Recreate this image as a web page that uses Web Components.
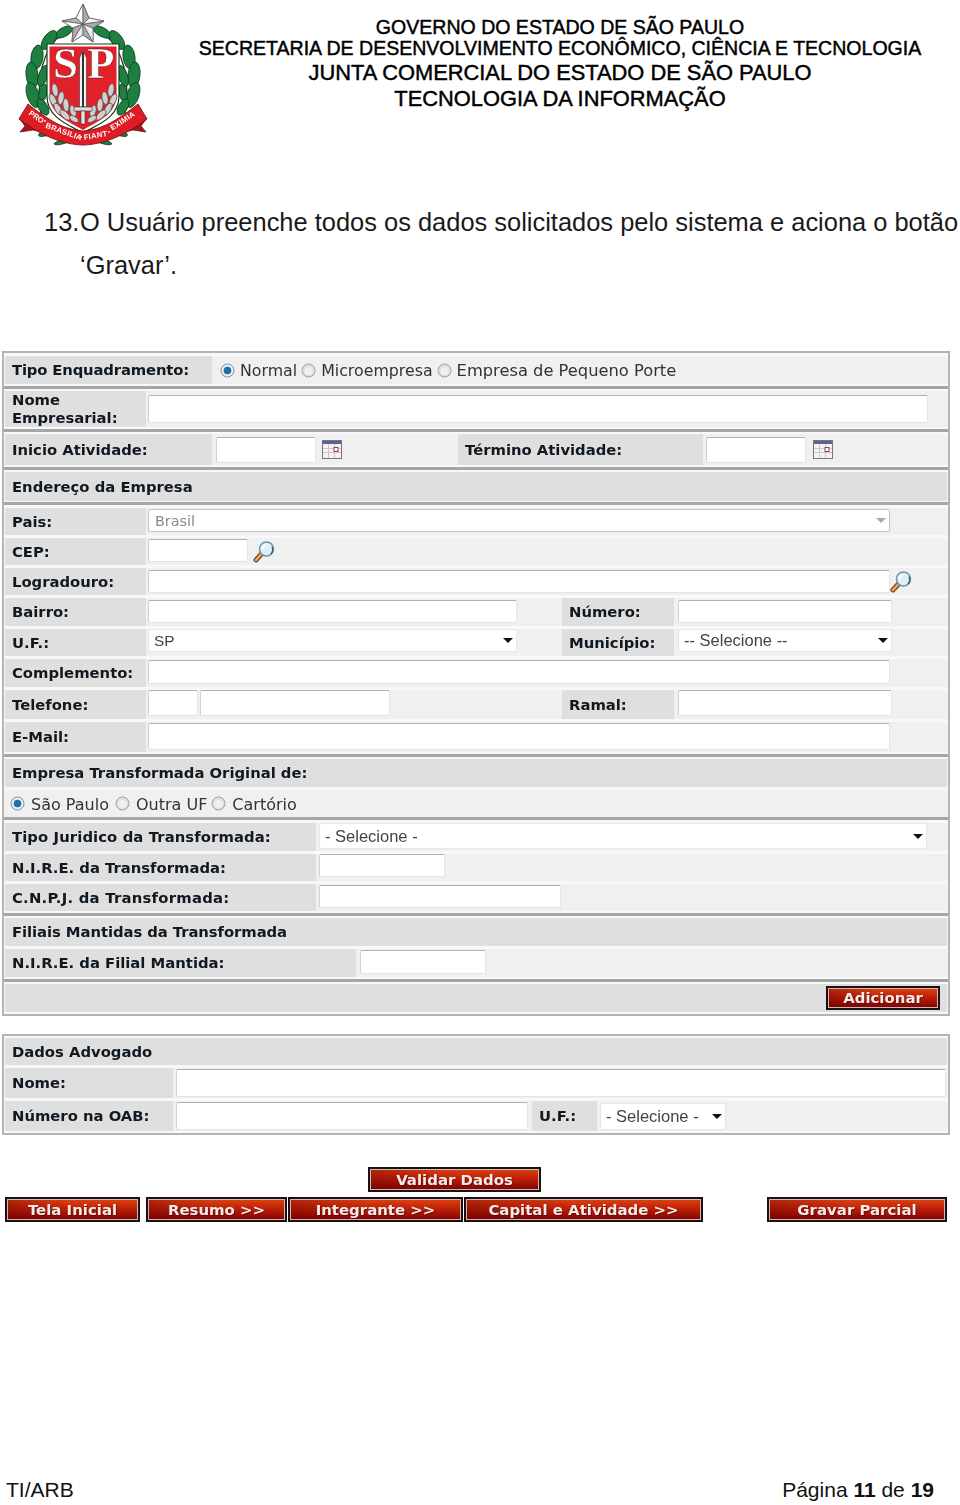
<!DOCTYPE html>
<html lang="pt">
<head>
<meta charset="utf-8">
<title>Manual</title>
<style>
  html, body { margin: 0; padding: 0; background: #fff; }
  body { height: 1505px; overflow: hidden; display: flex; flex-direction: column; font-family: "Liberation Sans", sans-serif; color: #111; }
</style>
</head>
<body>
<gov-header>
  <sp-logo slot="logo"></sp-logo>
  <span>GOVERNO DO ESTADO DE SÃO PAULO</span>
  <span>SECRETARIA DE DESENVOLVIMENTO ECONÔMICO, CIÊNCIA E TECNOLOGIA</span>
  <span class="big" style="margin-top:1px">JUNTA COMERCIAL DO ESTADO DE SÃO PAULO</span>
  <span class="big">TECNOLOGIA DA INFORMAÇÃO</span>
</gov-header>

<step-text num="13.">O Usuário preenche todos os dados solicitados pelo sistema e aciona o botão ‘Gravar’.</step-text>

<form-panel style="margin-top:64px">
  <form-section style="--pt:3px;--pb:2px">
    <form-row style="height:28px">
      <f-label style="width:207px;letter-spacing:-.15px">Tipo Enquadramento:</f-label>
      <f-radios style="margin-left:8px;--gap:4px;font-size:15.8px">
        <f-radio checked>Normal</f-radio>
        <f-radio>Microempresa</f-radio>
        <f-radio style="font-size:16.3px">Empresa de Pequeno Porte</f-radio>
      </f-radios>
    </form-row>
  </form-section>
  <form-section style="--pt:2px;--pb:2px">
    <form-row style="height:36px">
      <f-label style="width:141px">Nome<br>Empresarial:</f-label>
      <f-input style="width:780px;height:28px;margin-left:2px"></f-input>
    </form-row>
  </form-section>
  <form-section style="--pt:2px;--pb:2px">
    <form-row style="height:31px">
      <f-label style="width:207px">Inicio Atividade:</f-label>
      <f-input style="width:100px;height:26px;margin-left:4px"></f-input>
      <cal-icon style="margin-left:6px"></cal-icon>
      <f-label style="width:245px;margin-left:116px">Término Atividade:</f-label>
      <f-input style="width:100px;height:26px;margin-left:3px"></f-input>
      <cal-icon style="margin-left:7px"></cal-icon>
    </form-row>
  </form-section>
  <form-section style="--pt:2px;--pb:1px">
    <form-row style="height:29px"><f-label style="flex:1">Endereço da Empresa</f-label></form-row>
  </form-section>
  <form-section style="--pt:3px;--pb:2px">
    <form-row style="height:27px">
      <f-label style="width:141px">Pais:</f-label>
      <f-select muted style="width:742px;height:23px;margin:0 0 2px 2px">Brasil</f-select>
    </form-row>
    <form-row style="height:27px">
      <f-label style="width:141px">CEP:</f-label>
      <f-input style="width:100px;height:23px;margin:0 0 2px 2px"></f-input>
      <lens-icon style="margin-left:5px"></lens-icon>
    </form-row>
    <form-row style="height:27px">
      <f-label style="width:141px">Logradouro:</f-label>
      <f-input style="width:742px;height:23px;margin-left:2px"></f-input>
      <lens-icon></lens-icon>
    </form-row>
    <form-row style="height:28px">
      <f-label style="width:141px">Bairro:</f-label>
      <f-input style="width:369px;height:23px;margin:0 0 2px 2px"></f-input>
      <f-label style="width:112px;margin-left:45px">Número:</f-label>
      <f-input style="width:214px;height:23px;margin:0 0 2px 4px"></f-input>
    </form-row>
    <form-row style="height:27px">
      <f-label style="width:141px">U.F.:</f-label>
      <f-select style="width:369px;height:23px;margin:0 0 4px 2px;font-size:15.4px">SP</f-select>
      <f-label style="width:112px;margin-left:45px">Município:</f-label>
      <f-select style="width:214px;height:23px;margin:0 0 4px 4px">-- Selecione --</f-select>
    </form-row>
    <form-row style="height:28px">
      <f-label style="width:141px">Complemento:</f-label>
      <f-input style="width:742px;height:24px;margin:0 0 2px 2px"></f-input>
    </form-row>
    <form-row style="height:29px">
      <f-label style="width:141px">Telefone:</f-label>
      <f-input style="width:50px;height:26px;margin:0 0 3px 2px"></f-input>
      <f-input style="width:190px;height:26px;margin:0 0 3px 2px"></f-input>
      <f-label style="width:112px;margin-left:172px">Ramal:</f-label>
      <f-input style="width:214px;height:26px;margin:0 0 3px 4px"></f-input>
    </form-row>
    <form-row style="height:30px">
      <f-label style="width:141px">E-Mail:</f-label>
      <f-input style="width:742px;height:27px;margin:0 0 2px 2px"></f-input>
    </form-row>
  </form-section>
  <form-section style="--pt:2px;--pb:0px">
    <form-row style="height:28px"><f-label style="flex:1">Empresa Transformada Original de:</f-label></form-row>
    <form-row style="height:27px">
      <f-radios style="margin-left:5px;--gap:6px;--lgap:6px">
        <f-radio checked>São Paulo</f-radio>
        <f-radio>Outra UF</f-radio>
        <f-radio style="margin-left:-2px">Cartório</f-radio>
      </f-radios>
    </form-row>
  </form-section>
  <form-section style="--pt:3px;--pb:2px">
    <form-row style="height:28px">
      <f-label style="width:311px;letter-spacing:.1px">Tipo Juridico da Transformada:</f-label>
      <f-select style="width:608px;height:26px;margin:0 0 2px 3px">- Selecione -</f-select>
    </form-row>
    <form-row style="height:27px">
      <f-label style="width:311px">N.I.R.E. da Transformada:</f-label>
      <f-input style="width:126px;height:23px;margin:0 0 4px 3px"></f-input>
    </form-row>
    <form-row style="height:27px">
      <f-label style="width:311px;letter-spacing:.25px">C.N.P.J. da Transformada:</f-label>
      <f-input style="width:242px;height:23px;margin:0 0 2px 3px"></f-input>
    </form-row>
  </form-section>
  <form-section style="--pt:2px;--pb:2px">
    <form-row style="height:28px"><f-label style="flex:1;letter-spacing:-.06px">Filiais Mantidas da Transformada</f-label></form-row>
    <form-row style="height:28px">
      <f-label style="width:351px">N.I.R.E. da Filial Mantida:</f-label>
      <f-input style="width:126px;height:24px;margin:0 0 2px 4px"></f-input>
    </form-row>
  </form-section>
  <form-section last style="--pt:2px;--pb:2px">
    <form-row style="height:28px;background:#dfdfdf;justify-content:flex-end;align-items:center">
      <red-button style="width:114px;height:24px;margin-right:7px">Adicionar</red-button>
    </form-row>
  </form-section>
</form-panel>

<form-panel style="margin-top:18px">
  <form-section last style="--pt:2px;--pb:2px">
    <form-row style="height:27px"><f-label style="flex:1">Dados Advogado</f-label></form-row>
    <form-row style="height:30px">
      <f-label style="width:168px">Nome:</f-label>
      <f-input style="width:770px;height:28px;margin-left:3px"></f-input>
    </form-row>
    <form-row style="height:30px">
      <f-label style="width:168px">Número na OAB:</f-label>
      <f-input style="width:352px;height:28px;margin-left:3px"></f-input>
      <f-label style="width:65px;margin-left:4px">U.F.:</f-label>
      <f-select style="width:126px;height:27px;margin-left:3px">- Selecione -</f-select>
    </form-row>
  </form-section>
</form-panel>

<button-bar style="margin-top:32px;padding-left:368px">
  <red-button style="width:173px;height:25px">Validar Dados</red-button>
</button-bar>
<button-bar style="margin-top:5px;padding-left:5px">
  <red-button style="width:135px;height:25px">Tela Inicial</red-button>
  <red-button style="width:141px;height:25px;margin-left:6px">Resumo &gt;&gt;</red-button>
  <red-button style="width:175px;height:25px;margin-left:1px">Integrante &gt;&gt;</red-button>
  <red-button style="width:239px;height:25px;margin-left:1px">Capital e Atividade &gt;&gt;</red-button>
  <red-button style="width:180px;height:25px;margin-left:64px">Gravar Parcial</red-button>
</button-bar>

<page-footer>
  <span slot="left">TI/ARB</span>
  <span slot="right">Página <b>11</b> de <b>19</b></span>
</page-footer>

<script>
const FORM_FONT = '"DejaVu Sans", Verdana, sans-serif';

class GovHeader extends HTMLElement {
  constructor() {
    super();
    this.attachShadow({ mode: "open" });
    this.shadowRoot.innerHTML = `
    <style>
      :host { display: flex; height: 150px; flex: none; }
      .lines {
        flex: 1; display: flex; flex-direction: column; align-items: center;
        padding-top: 17px; font-size: 19.55px; line-height: 21px; color: #000;
        -webkit-text-stroke: .45px #000;
      }
      ::slotted(.big) { font-size: 21.85px; line-height: 25.5px; }
      ::slotted(span) { white-space: nowrap; }
    </style>
    <slot name="logo"></slot>
    <div class="lines"><slot></slot></div>`;
  }
}

class SpLogo extends HTMLElement {
  constructor() {
    super();
    this.attachShadow({ mode: "open" });
    this.shadowRoot.innerHTML = `
    <style>:host { display: block; width: 160px; height: 150px; flex: none; } svg { display: block; filter: blur(.3px); }</style>
    <svg width="160" height="150" viewBox="0 0 160 150">
      <defs>
        <g id="wreath">
          <path d="M62 34 C44 48 34 78 42 120" fill="none" stroke="#3a3a22" stroke-width="1.4"/>
          <g fill="#1d8040" stroke="#0c3d1c" stroke-width=".8">
            <ellipse cx="64" cy="32" rx="4.5" ry="10" transform="rotate(62 64 32)"/>
            <ellipse cx="49" cy="40" rx="5.5" ry="11" transform="rotate(36 49 40)"/>
            <ellipse cx="37" cy="57" rx="6" ry="12" transform="rotate(8 37 57)"/>
            <ellipse cx="32" cy="75" rx="6" ry="13" transform="rotate(-6 32 75)"/>
            <ellipse cx="43" cy="76" rx="4.5" ry="11" transform="rotate(18 43 76)"/>
            <ellipse cx="33" cy="95" rx="6" ry="13" transform="rotate(-18 33 95)"/>
            <ellipse cx="43" cy="93" rx="4" ry="9" transform="rotate(12 43 93)"/>
            <ellipse cx="43" cy="107" rx="4.5" ry="9" transform="rotate(-30 43 107)"/>
            <ellipse cx="48" cy="132" rx="3" ry="10" transform="rotate(70 48 132)"/>
            <ellipse cx="62" cy="142" rx="2" ry="8" transform="rotate(76 62 142)"/>
          </g>
        </g>
        <g id="silver" fill="#cfcfcf" stroke="#4c4c4c" stroke-width=".7">
          <ellipse cx="55" cy="90" rx="3" ry="6.5" transform="rotate(-10 55 90)"/>
          <ellipse cx="53" cy="100" rx="3" ry="6.5" transform="rotate(-25 53 100)"/>
          <ellipse cx="61" cy="98" rx="3" ry="6.5" transform="rotate(10 61 98)"/>
          <ellipse cx="58" cy="109" rx="3" ry="6.5" transform="rotate(-30 58 109)"/>
          <ellipse cx="66" cy="105" rx="3" ry="6.5" transform="rotate(-5 66 105)"/>
          <ellipse cx="65" cy="115" rx="3" ry="6.5" transform="rotate(-45 65 115)"/>
          <ellipse cx="73" cy="111" rx="3" ry="6" transform="rotate(-15 73 111)"/>
          <ellipse cx="74" cy="119" rx="2.6" ry="5" transform="rotate(-60 74 119)"/>
        </g>
      </defs>
      <use href="#wreath"/>
      <use href="#wreath" transform="translate(166 0) scale(-1 1)"/>
      <g stroke="#555" stroke-width=".7" stroke-linejoin="round">
        <polygon points="83,4 76,18 62,21 73,28 72,42 83,35 93,42 93,28 104,21 89,18" fill="#e9e9e9"/>
        <polygon points="83,4 83,24 76,18" fill="#fff"/><polygon points="83,4 83,24 89,18" fill="#aaa"/>
        <polygon points="62,21 83,24 76,18" fill="#b5b5b5"/><polygon points="62,21 83,24 73,28" fill="#fff"/>
        <polygon points="72,42 83,24 73,28" fill="#aaa"/><polygon points="72,42 83,24 83,35" fill="#eee"/>
        <polygon points="93,42 83,24 83,35" fill="#aaa"/><polygon points="93,42 83,24 93,28" fill="#eee"/>
        <polygon points="104,21 83,24 93,28" fill="#aaa"/><polygon points="104,21 83,24 89,18" fill="#f4f4f4"/>
      </g>
      <path d="M47 44 H119 V96 C119 118 97 125 83 133 C69 125 47 118 47 96 Z" fill="#fff" stroke="#123a1c" stroke-width="1.2"/>
      <path d="M49.5 46.5 H116.5 V95 C116.5 115 96 122 83 130 C70 122 49.5 115 49.5 95 Z" fill="#e2202a"/>
      <text x="53" y="78" font-family="'Liberation Serif', serif" font-weight="700" font-size="45" fill="#fff" stroke="#4a1010" stroke-width=".4">S</text>
      <text x="87" y="78" font-family="'Liberation Serif', serif" font-weight="700" font-size="45" fill="#fff" stroke="#4a1010" stroke-width=".4">P</text>
      <use href="#silver"/>
      <use href="#silver" transform="translate(166 0) scale(-1 1)"/>
      <path d="M83 50 L86.5 58 V107 H79.5 V58 Z" fill="#f3f3f3" stroke="#333" stroke-width=".6"/>
      <path d="M83 52 V107" stroke="#333" stroke-width="2"/>
      <rect x="74" y="107" width="18" height="4" fill="#ddd" stroke="#333" stroke-width=".6"/>
      <rect x="81" y="111" width="4" height="13" fill="#e4e4e4" stroke="#333" stroke-width=".6"/>
      <g fill="#a5141b" stroke="#5b0b0e" stroke-width=".7">
        <path d="M19 118 L44 126 L46 133 L33 130 L20 132 L25 126 Z"/>
        <path d="M147 118 L122 126 L120 133 L133 130 L146 132 L141 126 Z"/>
      </g>
      <path d="M28 104 C48 120 65 130 83 131 C101 130 118 120 138 104 L147 119 C125 136 101 145 83 145 C65 145 41 136 19 119 Z" fill="#dd1c24" stroke="#6a0d10" stroke-width=".8"/>
      <g font-family="'Liberation Sans', sans-serif" font-size="7.6" font-weight="700" fill="#fff" text-anchor="middle">
        <text transform="translate(35 119) rotate(36)">PRO</text>
        <text transform="translate(63 134) rotate(20)" letter-spacing=".3">BRASILIA</text>
        <text transform="translate(96 138) rotate(-10)" letter-spacing=".3">FIANT</text>
        <text transform="translate(124 123) rotate(-33)" letter-spacing=".3">EXIMIA</text>
      </g>
      <g fill="#fff"><circle cx="45" cy="121" r=".9"/><circle cx="81" cy="137" r=".9"/><circle cx="109" cy="132" r=".9"/></g>
    </svg>`;
  }
}

class StepText extends HTMLElement {
  constructor() {
    super();
    this.attachShadow({ mode: "open" });
    this.shadowRoot.innerHTML = `
    <style>
      :host { display: flex; flex: none; padding-left: 44px; margin-top: 51px; font-size: 25.45px; line-height: 43px; color: #1a1a1a; }
      .num { width: 36px; flex: none; }
      .txt { width: 880px; }
    </style>
    <span class="num">${this.getAttribute("num") || ""}</span>
    <span class="txt"><slot></slot></span>`;
  }
}

class FormPanel extends HTMLElement {
  constructor() {
    super();
    this.attachShadow({ mode: "open" });
    this.shadowRoot.innerHTML = `
    <style>
      :host {
        display: block; flex: none; box-sizing: border-box; width: 948px; margin-left: 2px;
        border: 2px solid #b4b4b4; background: #f8f8f8; font-family: ${FORM_FONT};
        filter: blur(.35px);
      }
    </style>
    <slot></slot>`;
  }
}

class FormSection extends HTMLElement {
  constructor() {
    super();
    this.attachShadow({ mode: "open" });
    this.shadowRoot.innerHTML = `
    <style>
      :host {
        display: flex; flex-direction: column; gap: 3px;
        padding: var(--pt, 2px) 1px var(--pb, 2px);
        border-bottom: 3px solid #a6a6a6;
      }
      :host([last]) { border-bottom: 0; }
    </style>
    <slot></slot>`;
  }
}

class FormRow extends HTMLElement {
  constructor() {
    super();
    this.attachShadow({ mode: "open" });
    this.shadowRoot.innerHTML = `
    <style>
      :host { display: flex; align-items: center; background: #f0f0f0; }
    </style>
    <slot></slot>`;
  }
}

class FLabel extends HTMLElement {
  constructor() {
    super();
    this.attachShadow({ mode: "open" });
    this.shadowRoot.innerHTML = `
    <style>
      :host {
        display: flex; align-items: center; align-self: stretch; flex: none; box-sizing: border-box;
        padding-left: 7px; background: #dfdfdf; color: #101820;
        font-weight: 700; font-size: 14.8px; line-height: 18px;
      }
    </style>
    <div><slot></slot></div>`;
  }
}

class FInput extends HTMLElement {
  constructor() {
    super();
    this.attachShadow({ mode: "open" });
    this.shadowRoot.innerHTML = `
    <style>
      :host {
        display: block; flex: none; box-sizing: border-box; background: #fff;
        border: 1px solid #e4e4e4; border-top-color: #b0b0b0; border-left-color: #d2d2d2; border-radius: 2px;
      }
    </style>`;
  }
}

class FSelect extends HTMLElement {
  constructor() {
    super();
    this.attachShadow({ mode: "open" });
    this.shadowRoot.innerHTML = `
    <style>
      :host {
        display: flex; align-items: center; flex: none; box-sizing: border-box; background: #fff;
        padding: 0 3px 0 5px; border: 1px solid #e6e6e6; border-radius: 2px;
        font-family: "Liberation Sans", sans-serif; font-size: 16.5px; color: #444;
      }
      :host([muted]) {
        padding-left: 6px; border-color: #c4c4c4; font-family: ${FORM_FONT}; font-size: 14.4px; color: #8a8a8a;
      }
      .t { flex: 1; }
      .a { width: 0; height: 0; border: 5px solid transparent; border-top: 5px solid #111; border-bottom: 0; }
      :host([muted]) .a { border-top-color: #aaa; }
    </style>
    <span class="t"><slot></slot></span><span class="a"></span>`;
  }
}

class FRadios extends HTMLElement {
  constructor() {
    super();
    this.attachShadow({ mode: "open" });
    this.shadowRoot.innerHTML = `
    <style>:host { display: flex; align-items: center; gap: var(--gap, 4px); font-size: 16px; }</style>
    <slot></slot>`;
  }
}

class FRadio extends HTMLElement {
  constructor() {
    super();
    this.attachShadow({ mode: "open" });
    const on = this.hasAttribute("checked");
    this.shadowRoot.innerHTML = `
    <style>
      :host { display: flex; align-items: center; gap: var(--lgap, 5px); color: #333; white-space: nowrap; }
      svg { display: block; flex: none; }
      span { padding-top: 1px; }
    </style>
    <svg width="15" height="15" viewBox="0 0 15 15">
      <circle cx="7.5" cy="7.5" r="6.5" fill="${on ? "#e8eef4" : "#e0e0e0"}" stroke="${on ? "#7d93a8" : "#a0a0a0"}"/>
      ${on ? '<circle cx="7.5" cy="7.5" r="3.8" fill="#1f6fa8"/>' : '<circle cx="7.5" cy="8" r="4" fill="#f0f0f0"/>'}
    </svg>
    <span><slot></slot></span>`;
  }
}

class CalIcon extends HTMLElement {
  constructor() {
    super();
    this.attachShadow({ mode: "open" });
    this.shadowRoot.innerHTML = `
    <style>:host { display: block; flex: none; width: 20px; height: 19px; } svg { display: block; }</style>
    <svg width="20" height="19" viewBox="0 0 20 19">
      <rect x=".5" y=".5" width="19" height="18" fill="#f6f3ee" stroke="#76767c"/>
      <rect x="1" y="1" width="18" height="3" fill="#5a6396"/>
      <path d="M1 8.5H19M1 12.5H19M6.5 4V18M12.5 4V18" stroke="#c9c9cf" fill="none"/>
      <rect x="12" y="7.5" width="4" height="4" fill="#fff" stroke="#a03a4a"/>
    </svg>`;
  }
}

class LensIcon extends HTMLElement {
  constructor() {
    super();
    this.attachShadow({ mode: "open" });
    this.shadowRoot.innerHTML = `
    <style>:host { display: block; flex: none; width: 22px; height: 22px; } svg { display: block; }</style>
    <svg width="22" height="22" viewBox="0 0 22 22">
      <path d="M8 13.5 L3 19" stroke="#7a4a22" stroke-width="5" stroke-linecap="round"/>
      <path d="M8 13.5 L3 19" stroke="#e8a868" stroke-width="2.6" stroke-linecap="round"/>
      <circle cx="13.5" cy="8" r="7" fill="#dcf0f8" stroke="#6f97aa" stroke-width="1.5"/>
      <path d="M9.5 9a4.4 4.4 0 0 1 3.5-5" stroke="#fff" stroke-width="1.8" fill="none"/>
      <path d="M19 5.5a7 7 0 0 1-1 7.5" stroke="#3d5f70" stroke-width="1.4" fill="none"/>
    </svg>`;
  }
}

class RedButton extends HTMLElement {
  constructor() {
    super();
    this.attachShadow({ mode: "open" });
    this.shadowRoot.innerHTML = `
    <style>
      :host {
        display: flex; align-items: center; justify-content: center; flex: none; box-sizing: border-box;
        border: 2px solid #1c1010; box-shadow: inset 0 0 0 1px #cdbab6;
        background: linear-gradient(90deg, rgba(110,0,0,.4), rgba(110,0,0,0) 45%),
                    linear-gradient(#dc4510, #c01f08 45%, #7e0202);
        color: #f4ecea; font-family: ${FORM_FONT}; font-weight: 700; font-size: 14.95px; white-space: nowrap;
        text-shadow: 1px 1px 0 rgba(70,0,0,.55); filter: blur(.3px);
      }
    </style>
    <slot></slot>`;
  }
}

class ButtonBar extends HTMLElement {
  constructor() {
    super();
    this.attachShadow({ mode: "open" });
    this.shadowRoot.innerHTML = `
    <style>:host { display: flex; flex: none; }</style>
    <slot></slot>`;
  }
}

class PageFooter extends HTMLElement {
  constructor() {
    super();
    this.attachShadow({ mode: "open" });
    this.shadowRoot.innerHTML = `
    <style>
      :host {
        display: flex; justify-content: space-between; flex: none; margin-top: auto;
        padding: 0 26px 2px 6px; font-size: 21px; line-height: 26px; color: #111;
      }
    </style>
    <slot name="left"></slot><slot name="right"></slot>`;
  }
}

customElements.define("gov-header", GovHeader);
customElements.define("sp-logo", SpLogo);
customElements.define("step-text", StepText);
customElements.define("form-panel", FormPanel);
customElements.define("form-section", FormSection);
customElements.define("form-row", FormRow);
customElements.define("f-label", FLabel);
customElements.define("f-input", FInput);
customElements.define("f-select", FSelect);
customElements.define("f-radios", FRadios);
customElements.define("f-radio", FRadio);
customElements.define("cal-icon", CalIcon);
customElements.define("lens-icon", LensIcon);
customElements.define("red-button", RedButton);
customElements.define("button-bar", ButtonBar);
customElements.define("page-footer", PageFooter);
</script>
</body>
</html>
